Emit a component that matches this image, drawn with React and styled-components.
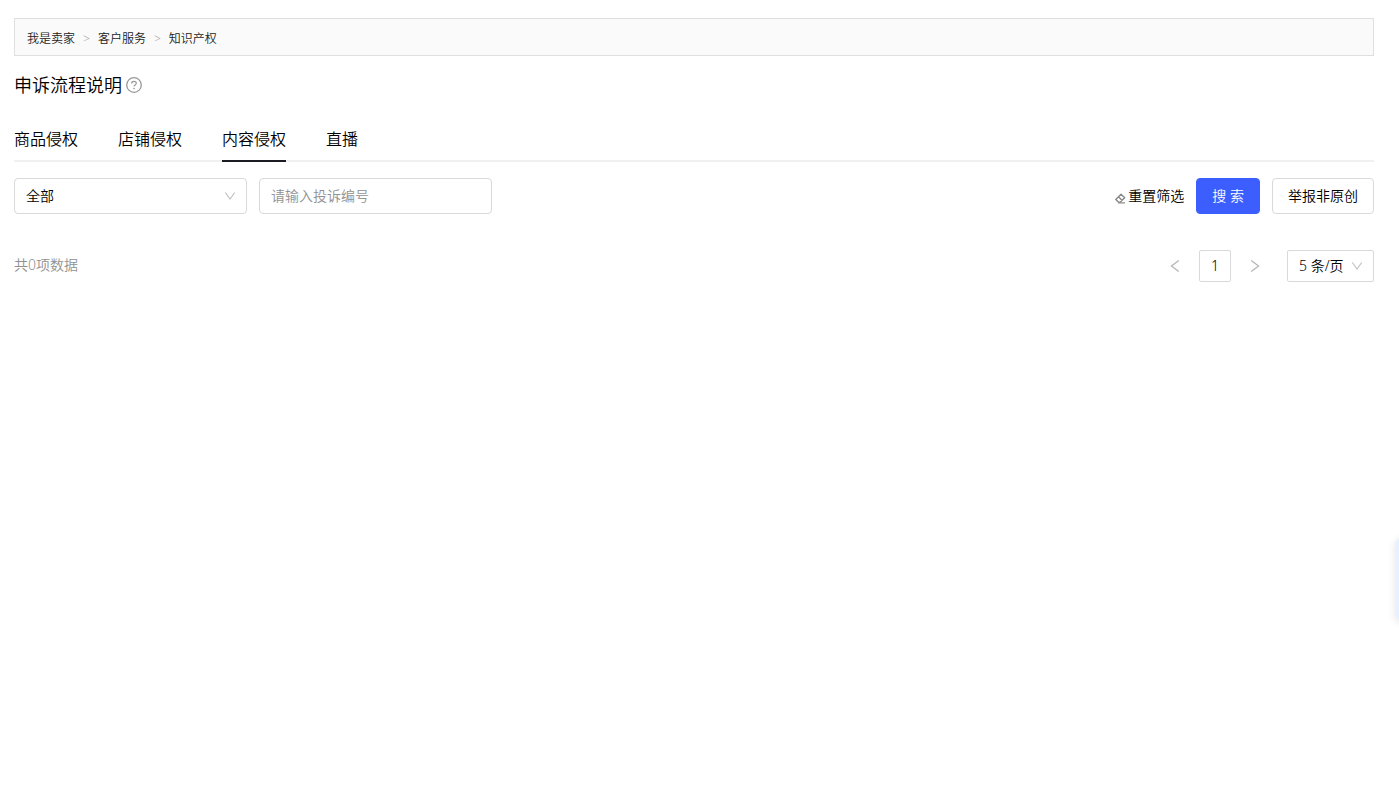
import React, { useState } from 'react';
import styled, { createGlobalStyle } from 'styled-components';

const GlobalStyle = createGlobalStyle`
  * {
    box-sizing: border-box;
  }
  body {
    margin: 0;
    background: #fff;
    color: #000;
    font-family: 'Noto Sans', 'Noto Sans CJK SC', sans-serif;
    font-size: 14px;
    font-weight: 350;
    line-height: 20px;
  }
  button,
  input,
  select {
    margin: 0;
    font: inherit;
    color: inherit;
  }
  button {
    cursor: pointer;
  }
`;

const Page = styled.main`
  padding: 18px 25px 0 14px;
`;

const Breadcrumb = styled.nav`
  display: flex;
  align-items: center;
  gap: 8px;
  height: 38px;
  padding: 4px 12px 0;
  border: 1px solid #dfdfdf;
  background: #fafafa;
  color: #222;
  font-size: 12px;

  a {
    color: inherit;
    text-decoration: none;
  }
`;

const Separator = styled.span`
  color: #aaa;
`;

const Title = styled.h1`
  display: flex;
  align-items: center;
  gap: 4px;
  margin: 15px 0 16px;
  font-size: 18px;
  font-weight: inherit;
  line-height: 28px;
`;

const HelpButton = styled.button`
  display: flex;
  padding: 0;
  border: 0;
  background: none;
  color: #999;
`;

const Tabs = styled.div`
  display: flex;
  gap: 40px;
  box-shadow: inset 0 -2px #f0f0f0;
`;

const Tab = styled.button`
  padding: 12px 0 9px;
  border: 0;
  border-bottom: 2px solid ${({ $active }) => ($active ? '#1b1b24' : 'transparent')};
  background: none;
  font-size: 16px;
  line-height: 24px;
`;

const Toolbar = styled.div`
  display: flex;
  align-items: center;
  gap: 12px;
  margin-top: 16px;
`;

const Actions = styled.div`
  display: flex;
  align-items: center;
  gap: 12px;
  margin-left: auto;
`;

const SelectBox = styled.div`
  position: relative;
  width: ${({ $small }) => ($small ? '87px' : '233px')};

  select {
    width: 100%;
    height: ${({ $small }) => ($small ? '32px' : '36px')};
    padding: 0 11px;
    border: 1px solid #d9d9d9;
    border-radius: ${({ $small }) => ($small ? '2px' : '4px')};
    background: #fff;
    appearance: none;
  }
  svg {
    position: absolute;
    top: 0;
    bottom: 0;
    right: 11px;
    margin: auto;
    color: #bfbfbf;
    pointer-events: none;
  }
`;

const TextInput = styled.input`
  width: 233px;
  height: 36px;
  padding: 0 11px 2px;
  border: 1px solid #d9d9d9;
  border-radius: 4px;
  background: #fff;

  &::placeholder {
    color: #919191;
    opacity: 1;
  }
`;

const Button = styled.button`
  height: 36px;
  padding: 0 15px;
  border: 1px solid ${({ $primary }) => ($primary ? '#3c5eff' : '#d9d9d9')};
  border-radius: 4px;
  background: ${({ $primary }) => ($primary ? '#3c5eff' : '#fff')};
  color: ${({ $primary }) => ($primary ? '#fff' : '#000')};
`;

const ResetButton = styled.button`
  display: flex;
  align-items: center;
  gap: 2px;
  padding: 0;
  border: 0;
  background: none;

  svg {
    margin-top: 4px;
    color: #888;
  }
`;

const Footer = styled.footer`
  display: flex;
  align-items: center;
  justify-content: space-between;
  margin-top: 36px;
`;

const Total = styled.span`
  padding-bottom: 2px;
  color: #919191;
`;

const Pagination = styled.div`
  display: flex;
  gap: 8px;
`;

const PageButton = styled.button`
  display: flex;
  align-items: center;
  justify-content: center;
  width: 32px;
  height: 32px;
  padding: 0;
  border: 1px solid ${({ $current }) => ($current ? '#d9d9d9' : 'transparent')};
  border-radius: 2px;
  background: #fff;
  color: ${({ $current }) => ($current ? '#000' : '#b3b3b3')};
`;

const PageSize = styled.div`
  margin-left: 8px;
`;

// Collapsed service panel, only its edge peeks into the window
const SideDock = styled.aside`
  position: fixed;
  right: -8px;
  bottom: 170px;
  width: 12px;
  height: 84px;
  border-radius: 8px 0 0 8px;
  background: #e6f2ff;
  box-shadow: 0 2px 8px rgba(0, 0, 0, 0.1);
`;

const HelpIcon = () => (
  <svg width="16" height="16" viewBox="0 0 16 16" fill="none" stroke="currentColor">
    <circle cx="8" cy="8" r="7.3" strokeWidth="1.3" />
    <path d="M5.7 6.4C5.7 5 6.6 4.3 8 4.3s2.3.9 2.3 2c0 1.6-2.3 1.6-2.3 3.2" strokeWidth="1.2" />
    <circle cx="8" cy="11.6" r=".8" fill="currentColor" stroke="none" />
  </svg>
);

const DownIcon = () => (
  <svg width="12" height="12" viewBox="0 0 12 12" fill="none" stroke="currentColor">
    <path d="M1.3 2.5L6 9l4.7-6.5" strokeWidth="1.1" />
  </svg>
);

const LeftIcon = () => (
  <svg width="12" height="12" viewBox="0 0 12 12" fill="none" stroke="currentColor">
    <path d="M9.8.6L2.4 6l7.4 5.4" strokeWidth="1.2" />
  </svg>
);

const RightIcon = () => (
  <svg width="12" height="12" viewBox="0 0 12 12" fill="none" stroke="currentColor">
    <path d="M2.2.6L9.6 6l-7.4 5.4" strokeWidth="1.2" />
  </svg>
);

const EraserIcon = () => (
  <svg width="11" height="11" viewBox="0 0 11 11" fill="none" stroke="currentColor">
    <path d="M6 1.2l3.7 3.5-4.4 4.4H3.4L.8 6.4zM3.5 3.7l3.7 3.7" strokeWidth="1.4" strokeLinejoin="round" />
    <path d="M3 9.9h7" strokeWidth="1.2" />
  </svg>
);

const tabs = ['商品侵权', '店铺侵权', '内容侵权', '直播'];

const App = () => {
  const [activeTab, setActiveTab] = useState('内容侵权');
  const [complaintId, setComplaintId] = useState('');

  return (
    <Page>
      <GlobalStyle />
      <Breadcrumb>
        <a href="#seller">我是卖家</a>
        <Separator>&gt;</Separator>
        <a href="#service">客户服务</a>
        <Separator>&gt;</Separator>
        <a href="#ip">知识产权</a>
      </Breadcrumb>
      <Title>
        申诉流程说明
        <HelpButton type="button" aria-label="帮助">
          <HelpIcon />
        </HelpButton>
      </Title>
      <Tabs role="tablist">
        {tabs.map((tab) => (
          <Tab
            key={tab}
            type="button"
            role="tab"
            aria-selected={tab === activeTab}
            $active={tab === activeTab}
            onClick={() => setActiveTab(tab)}
          >
            {tab}
          </Tab>
        ))}
      </Tabs>
      <Toolbar>
        <SelectBox>
          <select aria-label="状态">
            <option>全部</option>
          </select>
          <DownIcon />
        </SelectBox>
        <TextInput
          type="text"
          aria-label="投诉编号"
          placeholder="请输入投诉编号"
          value={complaintId}
          onChange={(e) => setComplaintId(e.target.value)}
        />
        <Actions>
          <ResetButton type="button" onClick={() => setComplaintId('')}>
            <EraserIcon />
            重置筛选
          </ResetButton>
          <Button type="button" $primary>
            搜 索
          </Button>
          <Button type="button">举报非原创</Button>
        </Actions>
      </Toolbar>
      <Footer>
        <Total>共0项数据</Total>
        <Pagination>
          <PageButton type="button" aria-label="上一页">
            <LeftIcon />
          </PageButton>
          <PageButton type="button" $current>
            1
          </PageButton>
          <PageButton type="button" aria-label="下一页">
            <RightIcon />
          </PageButton>
          <PageSize>
            <SelectBox $small>
              <select aria-label="每页条数">
                <option>5 条/页</option>
              </select>
              <DownIcon />
            </SelectBox>
          </PageSize>
        </Pagination>
      </Footer>
      <SideDock />
    </Page>
  );
};

export default App;
